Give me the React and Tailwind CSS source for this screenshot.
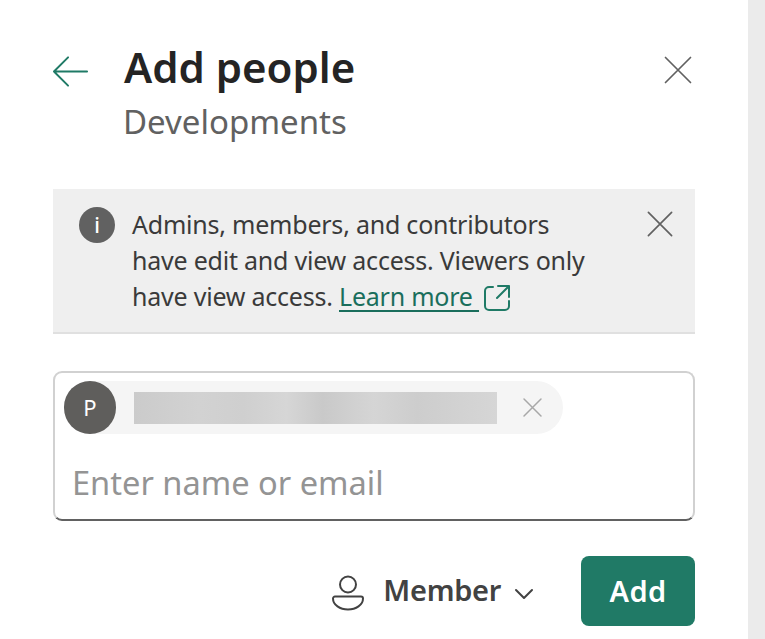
import React from 'react';

const font = "font-['Noto_Sans','Open_Sans',sans-serif]";

const Cross = ({ className = '', stroke = '#616161', width = 1.6 }) => (
  <svg viewBox="0 0 28 28" className={className} fill="none" stroke={stroke} strokeWidth={width} strokeLinecap="round">
    <path d="M1.5 1.5 26.5 26.5M26.5 1.5 1.5 26.5" />
  </svg>
);

const Header = () => (
  <div className="flex items-start">
    <svg viewBox="0 0 38 32" className="w-[37px] h-[32px] mt-[56px] -ml-[1px] shrink-0" fill="none" stroke="#1f7a66" strokeWidth="2" strokeLinecap="round" strokeLinejoin="round">
      <path d="M2 15.5h34M16.5 1 2 15.5 16.5 30" />
    </svg>
    <div className="ml-[35px] flex-1 pt-[39px]">
      <h1 className="text-[42px] leading-[56px] font-semibold text-[#242424]">Add people</h1>
      <p className="text-[33px] leading-[48px] text-[#616161] mt-[3px] -ml-[1px]">Developments</p>
    </div>
    <Cross className="w-[28px] h-[28px] mt-[56px] mr-[3px]" width="1.7" />
  </div>
);

const InfoBar = () => (
  <div className="mt-[43px] h-[145px] bg-[#efefef] border-b-2 border-[#e0e0e0] flex pl-[26px] pr-[22px] pt-[17px]">
    <div className="w-[36px] h-[36px] mt-[1px] rounded-full bg-[#616161] flex items-center justify-center shrink-0 text-white text-[21px] leading-none font-medium">i</div>
    <p className="ml-[17px] w-[465px] text-[25px] leading-[36px] text-[#3a3a3a] tracking-[-0.22px]">
      Admins, members, and contributors have edit and view access. Viewers only have view access.{' '}
      <a className="text-[#1a6e5c] underline underline-offset-4">Learn more&nbsp;</a>
      <svg viewBox="0 0 28 28" className="inline-block w-[28px] h-[28px] ml-[4px] -mt-[2px]" fill="none" stroke="#1f7a66" strokeWidth="2" strokeLinecap="round" strokeLinejoin="round">
        <path d="M10 3H6a4 4 0 0 0-4 4v15a4 4 0 0 0 4 4h16a4 4 0 0 0 4-4v-5M15 2h11v11M26 2 14 14" />
      </svg>
    </p>
    <Cross className="w-[26px] h-[26px] ml-auto mt-[5px] shrink-0" width="1.8" />
  </div>
);

const PeopleInput = () => (
  <div className="mt-[37px] h-[150px] rounded-[9px] border-2 border-[#d1d1d1] border-b-[#616161] px-[9px] pt-[8px]">
    <div className="w-[499px] h-[53px] rounded-full bg-[#f5f5f5] flex items-center">
      <div className="w-[52px] h-[53px] rounded-full bg-[#5f5e5c] text-white text-[22px] flex items-center justify-center shrink-0">P</div>
      <div className="ml-[18px] w-[363px] h-[32px] bg-[linear-gradient(90deg,#cbcbcb,#d2d2d2_18%,#cfcfcf_30%,#d6d6d6_42%,#c9c9c9_52%,#d5d5d5_66%,#cdcdcd_78%,#d6d6d6_100%)]" />
      <Cross className="w-[19px] h-[19px] ml-[26px] shrink-0" stroke="#a8a8a8" width="2.2" />
    </div>
    <p className="mt-[25px] ml-[8px] text-[32.6px] leading-[48px] text-[#949494]">Enter name or email</p>
  </div>
);

const Actions = () => (
  <div className="mt-[35px] flex items-center justify-end">
    <svg viewBox="0 0 32 36" className="w-[32px] h-[36px] mt-[4px]" fill="none" stroke="#424242" strokeWidth="2">
      <circle cx="16" cy="9.5" r="8" />
      <path d="M3 21.5h26a2 2 0 0 1 2 2C31 30 24 34.5 16 34.5S1 30 1 23.5a2 2 0 0 1 2-2Z" />
    </svg>
    <span className="ml-[19px] -mt-[2px] text-[29px] leading-[40px] font-semibold text-[#424242] tracking-[-0.3px]">Member</span>
    <svg viewBox="0 0 20 12" className="ml-[13px] w-[20px] h-[12px] mt-[5px]" fill="none" stroke="#424242" strokeWidth="2" strokeLinecap="round" strokeLinejoin="round">
      <path d="M2 2 10 10 18 2" />
    </svg>
    <button className="ml-[47px] w-[114px] h-[70px] rounded-[8px] bg-[#207a66] text-white text-[29px] font-semibold tracking-[0.4px]">Add</button>
  </div>
);

export default function App() {
  return (
    <div className={`flex h-[639px] w-[765px] overflow-hidden bg-white ${font}`}>
      <main className="w-[748px] pl-[53px] pr-[53px]">
        <Header />
        <InfoBar />
        <PeopleInput />
        <Actions />
      </main>
      <div className="w-[17px] bg-[#ebebeb]" />
    </div>
  );
}
